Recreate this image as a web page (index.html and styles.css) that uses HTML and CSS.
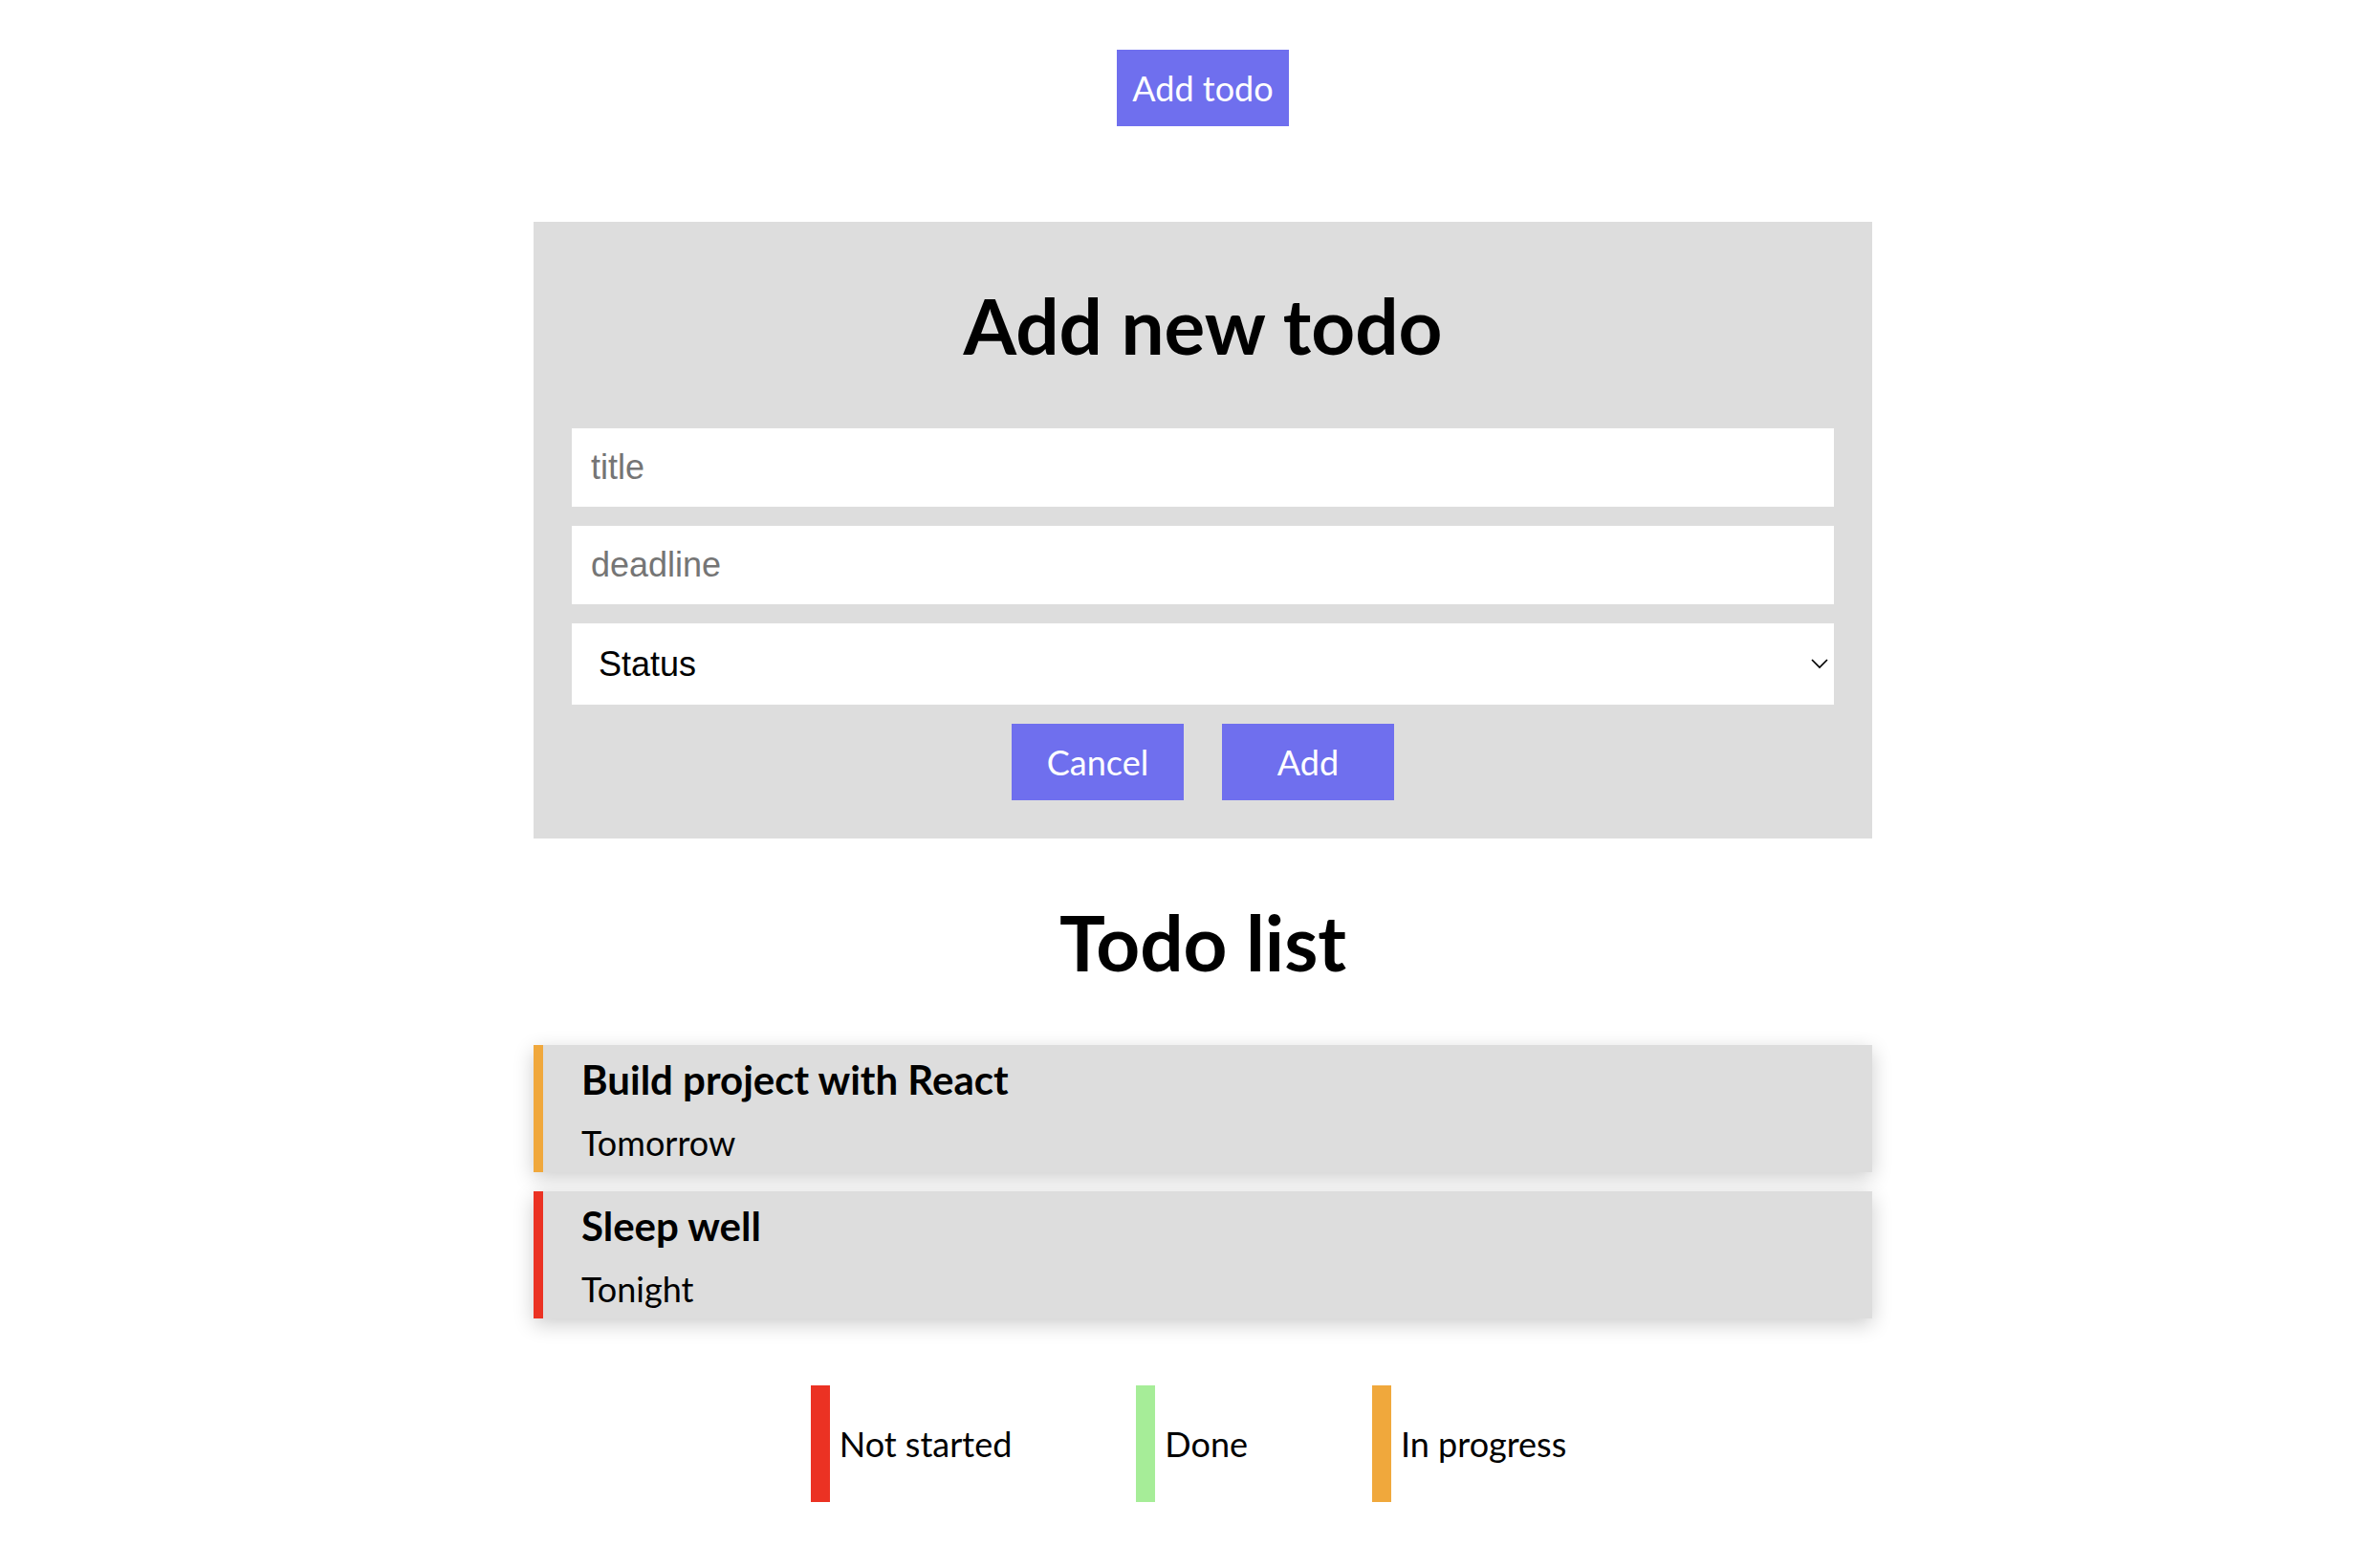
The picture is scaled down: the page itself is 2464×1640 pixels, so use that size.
FILE: index.html
```html
<!DOCTYPE html>
<html lang="en">
<head>
<meta charset="utf-8">
<meta name="viewport" content="width=device-width, initial-scale=1">
<title>Todo list</title>
<link rel="stylesheet" href="styles.css">
</head>
<body>
<main class="app">
  <button class="btn open-btn" type="button">Add todo</button>
  <form class="todo-form">
    <h1 class="heading">Add new todo</h1>
    <input class="field" type="text" placeholder="title" aria-label="title">
    <input class="field" type="text" placeholder="deadline" aria-label="deadline">
    <div class="select-wrap">
      <select class="field status" aria-label="Status">
        <option>Status</option>
      </select>
      <svg class="chevron" viewBox="0 0 18 12" aria-hidden="true"><path d="M1 2l8 8 8-8" fill="none" stroke="currentColor" stroke-width="1.7"/></svg>
    </div>
    <div class="actions">
      <button class="btn" type="button">Cancel</button>
      <button class="btn" type="submit">Add</button>
    </div>
  </form>
  <h1 class="heading">Todo list</h1>
  <ul class="todos">
    <li class="todo in-progress"><h2 class="todo-title">Build project with React</h2><p class="todo-deadline">Tomorrow</p></li>
    <li class="todo not-started"><h2 class="todo-title">Sleep well</h2><p class="todo-deadline">Tonight</p></li>
  </ul>
  <ul class="legend">
    <li class="legend-item not-started">Not started</li>
    <li class="legend-item done">Done</li>
    <li class="legend-item in-progress">In progress</li>
  </ul>
</main>
</body>
</html>
```
FILE: styles.css
```css
* { box-sizing: border-box; }

body {
  margin: 0;
  padding: 52px 0 0 52px;
  background: #fff;
  color: #000;
  font-family: Lato, sans-serif;
  font-size: 36px;
}

.app {
  display: flex;
  flex-direction: column;
  align-items: center;
  width: 100%;
  max-width: 1400px;
  margin: 0 auto;
}

.btn {
  width: 180px;
  height: 80px;
  padding: 0;
  border: 0;
  background: #6f6fee;
  color: #fff;
  font: inherit;
}

.open-btn { margin-bottom: 100px; }

.todo-form {
  display: flex;
  flex-direction: column;
  gap: 20px;
  width: 100%;
  padding: 0 40px 40px;
  background: #ddd;
}

.heading {
  margin: 60px 0;
  font-size: 80px;
  line-height: 96px;
  font-weight: 700;
  text-align: center;
}

.todo-form .heading { margin-bottom: 40px; }

.field {
  display: block;
  width: 100%;
  height: 82px;
  padding: 0 20px;
  border: 0;
  border-radius: 0;
  background: #fff;
  color: #000;
  font-family: "Liberation Sans", Arial, sans-serif;
  font-size: 36px;
}

.field::placeholder { color: #757575; }

.select-wrap { position: relative; }

.status {
  height: 85px;
  padding: 0 28px;
  appearance: none;
}

.chevron {
  position: absolute;
  top: 36px;
  right: 6px;
  width: 18px;
  height: 12px;
  pointer-events: none;
}

.actions {
  display: flex;
  justify-content: center;
  gap: 40px;
}

.todos,
.legend {
  margin: 0;
  padding: 0;
  list-style: none;
}

.todos {
  display: flex;
  flex-direction: column;
  gap: 20px;
  width: 100%;
}

.todo {
  padding: 11px 40px 9px;
  border-left: 10px solid;
  background: #ddd;
  box-shadow: 0 6px 20px rgba(0, 0, 0, 0.2);
}

.todo-title,
.todo-deadline { margin: 0; }

.todo-title {
  margin-bottom: 20px;
  font-size: 42px;
  line-height: 50px;
}

.todo-deadline { line-height: 43px; }

.legend {
  display: flex;
  gap: 130px;
  margin-top: 70px;
  padding-right: 30px;
}

.legend-item {
  padding-left: 10px;
  border-left: 20px solid;
  line-height: 122px;
}

.in-progress { border-color: #f0a83c; }
.not-started { border-color: #eb3223; }
.done { border-color: #a6ed98; }
```
